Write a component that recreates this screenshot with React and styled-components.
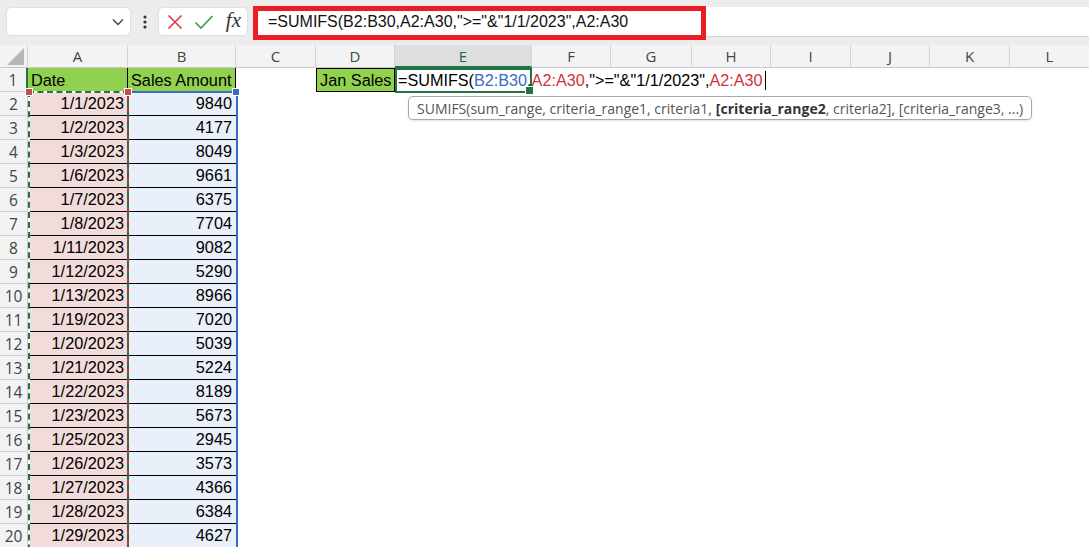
import React from 'react';
import styled, { createGlobalStyle } from 'styled-components';

const COLUMNS = ['A', 'B', 'C', 'D', 'E', 'F', 'G', 'H', 'I', 'J', 'K', 'L'];
// row header width, then A..L
const WIDTHS = [28, 100, 108, 80, 79, 137, 79, 81, 79, 80, 79, 80, 80];

const SALES = [
  ['1/1/2023', 9840],
  ['1/2/2023', 4177],
  ['1/3/2023', 8049],
  ['1/6/2023', 9661],
  ['1/7/2023', 6375],
  ['1/8/2023', 7704],
  ['1/11/2023', 9082],
  ['1/12/2023', 5290],
  ['1/13/2023', 8966],
  ['1/19/2023', 7020],
  ['1/20/2023', 5039],
  ['1/21/2023', 5224],
  ['1/22/2023', 8189],
  ['1/23/2023', 5673],
  ['1/25/2023', 2945],
  ['1/26/2023', 3573],
  ['1/27/2023', 4366],
  ['1/28/2023', 6384],
  ['1/29/2023', 4627],
];

const FORMULA = '=SUMIFS(B2:B30,A2:A30,">="&"1/1/2023",A2:A30';

const GlobalStyle = createGlobalStyle`
  html, body {
    margin: 0;
    padding: 0;
    background: #ffffff;
    overflow: hidden;
  }
  * {
    box-sizing: border-box;
  }
`;

const App = () => (
  <Page>
    <GlobalStyle />
    <TopBar>
      <NameBox>
        <svg width="12" height="8" viewBox="0 0 12 8">
          <path d="M1 1.5 L6 6.5 L11 1.5" fill="none" stroke="#444" strokeWidth="1.4" />
        </svg>
      </NameBox>
      <Dots>
        <svg width="4" height="14" viewBox="0 0 4 14">
          <circle cx="2" cy="2" r="1.6" fill="#333" />
          <circle cx="2" cy="7" r="1.6" fill="#333" />
          <circle cx="2" cy="12" r="1.6" fill="#333" />
        </svg>
      </Dots>
      <FormulaButtons>
        <svg width="16" height="16" viewBox="0 0 16 16">
          <path d="M1.5 1.5 L14.5 14.5 M14.5 1.5 L1.5 14.5" stroke="#e0383e" strokeWidth="1.6" />
        </svg>
        <svg width="20" height="16" viewBox="0 0 20 16">
          <path d="M1.5 8.5 L7 14 L18.5 2" fill="none" stroke="#3aa24a" strokeWidth="1.7" />
        </svg>
        <FxLabel>fx</FxLabel>
      </FormulaButtons>
      <FormulaField>
        <RedMark />
        <FormulaText>{FORMULA}</FormulaText>
      </FormulaField>
    </TopBar>

    <Sheet>
      <Corner>
        <svg width="17" height="17" viewBox="0 0 17 17">
          <path d="M17 0 L17 17 L0 17 Z" fill="#b6b6b6" />
        </svg>
      </Corner>
      {COLUMNS.map((c) => (
        <ColHeader key={c} $active={c === 'E'}>{c}</ColHeader>
      ))}

      <RowHeader $active>1</RowHeader>
      <Cell $fill="green" $border="right">Date</Cell>
      <Cell $fill="green" $border="right">Sales Amount</Cell>
      <Cell />
      <Cell $fill="green" $border="box">Jan Sales</Cell>
      <ActiveCell>
        <EditText>
          =SUMIFS(<Ref $color="#3a6cc4">B2:B30</Ref>,<Ref $color="#d13438">A2:A30</Ref>,"&gt;="&amp;"1/1/2023",<Ref $color="#d13438">A2:A30</Ref>
          <Caret />
        </EditText>
      </ActiveCell>
      {Array.from({ length: 7 }).map((_, i) => <Cell key={i} />)}

      {SALES.map(([date, amount], i) => (
        <React.Fragment key={date}>
          <RowHeader>{i + 2}</RowHeader>
          <Cell $fill="pink" $align="right" $border="bottom">{date}</Cell>
          <Cell $fill="blue" $align="right" $border="bottom">{amount}</Cell>
          {Array.from({ length: 10 }).map((_, j) => <Cell key={j} />)}
        </React.Fragment>
      ))}

      <DateRange />
      <AmountRange />
      <Handle $color="#c0504d" $x={29} />
      <Handle $color="#c0504d" $x={128} />
      <Handle $color="#3a6cc4" $x={236} />

      <Tooltip>
        SUMIFS(sum_range, criteria_range1, criteria1, <b>[criteria_range2</b>, criteria2], [criteria_range3, ...)
      </Tooltip>
    </Sheet>
  </Page>
);

const Page = styled.div`
  width: 1089px;
  height: 547px;
  overflow: hidden;
  display: flex;
  flex-direction: column;
  font-family: "Liberation Sans", Arial, sans-serif;
`;

const TopBar = styled.div`
  height: 45px;
  flex: none;
  display: flex;
  align-items: flex-start;
  padding: 7px 0 0 6px;
  background: #ececec;
`;

const NameBox = styled.div`
  width: 125px;
  height: 29px;
  background: #ffffff;
  border: 1px solid #e0e0e0;
  border-radius: 5px;
  display: flex;
  align-items: center;
  justify-content: flex-end;
  padding-right: 6px;
`;

const Dots = styled.div`
  width: 27px;
  height: 29px;
  display: flex;
  align-items: center;
  justify-content: center;
`;

const FormulaButtons = styled.div`
  width: 90px;
  height: 29px;
  background: #ffffff;
  border: 1px solid #e0e0e0;
  border-radius: 5px;
  display: flex;
  align-items: center;
  justify-content: space-between;
  padding: 0 6px 0 8px;
`;

const FxLabel = styled.span`
  font-family: "Liberation Serif", "Times New Roman", serif;
  font-style: italic;
  font-size: 21px;
  color: #333;
  line-height: 1;
  margin-bottom: 3px;
`;

const FormulaField = styled.div`
  position: relative;
  flex: 1;
  height: 30px;
  margin-left: 5px;
  background: #ffffff;
  border-bottom: 1px solid #d6d6d6;
  display: flex;
  align-items: center;
  padding-left: 15px;
`;

const RedMark = styled.div`
  position: absolute;
  left: 0;
  top: -1px;
  width: 453px;
  height: 34px;
  border: 5px solid #ec1c24;
`;

const FormulaText = styled.span`
  position: relative;
  font-size: 16px;
  color: #111;
  white-space: nowrap;
`;

const Sheet = styled.div`
  position: relative;
  flex: 1;
  display: grid;
  grid-template-columns: ${WIDTHS.map((w) => `${w}px`).join(' ')};
  grid-template-rows: 23px repeat(20, 24px);
  overflow: hidden;
`;

const Corner = styled.div`
  background: #f3f3f3;
  border-right: 1px solid #d4d4d4;
  border-bottom: 1px solid #c8c8c8;
  display: flex;
  align-items: flex-end;
  justify-content: flex-end;
  padding: 0 3px 2px 0;
`;

const ColHeader = styled.div`
  background: ${(p) => (p.$active ? '#dedede' : '#f3f3f3')};
  color: ${(p) => (p.$active ? '#1e6b41' : '#444')};
  border-right: 1px solid #d4d4d4;
  border-bottom: ${(p) => (p.$active ? '2px solid #217346' : '1px solid #c8c8c8')};
  font-family: "Open Sans", "Noto Sans", sans-serif;
  font-size: 15px;
  display: flex;
  align-items: center;
  justify-content: center;
`;

const RowHeader = styled.div`
  background: #f3f3f3;
  color: #444;
  border-bottom: 1px solid #d4d4d4;
  border-right: ${(p) => (p.$active ? '2px solid #217346' : '1px solid #c8c8c8')};
  font-family: "Open Sans", "Noto Sans", sans-serif;
  font-size: 15.5px;
  display: flex;
  align-items: center;
  justify-content: center;
`;

const FILLS = {
  green: '#92d050',
  pink: '#f2dcdb',
  blue: '#eaf0f9',
};

const BORDERS = {
  right: 'border-right: 1px solid #000;',
  bottom: 'border-bottom: 1px solid #000;',
  box: 'border: 1px solid #000;',
};

const Cell = styled.div`
  background: ${(p) => FILLS[p.$fill] || '#ffffff'};
  ${(p) => BORDERS[p.$border] || ''}
  display: flex;
  align-items: center;
  justify-content: ${(p) => (p.$align === 'right' ? 'flex-end' : 'flex-start')};
  padding: 0 4px 0 3px;
  font-size: 16.3px;
  color: #000;
  white-space: nowrap;
  overflow: hidden;
`;

const ActiveCell = styled.div`
  position: relative;
  z-index: 2;
  background: #ffffff;
  border: 2px solid #217346;
  margin-bottom: -1px;
  display: flex;
  align-items: center;
  padding-left: 1px;

  &::after {
    content: '';
    position: absolute;
    right: -4px;
    bottom: -4px;
    width: 7px;
    height: 7px;
    background: #217346;
    border: 1px solid #ffffff;
  }
`;

const EditText = styled.span`
  font-size: 16.2px;
  color: #000;
  white-space: nowrap;
  display: flex;
  align-items: center;
`;

const Ref = styled.span`
  color: ${(p) => p.$color};
`;

const Caret = styled.span`
  display: inline-block;
  width: 1px;
  height: 19px;
  margin-left: 2px;
  background: #000;
`;

const DateRange = styled.div`
  position: absolute;
  left: 28px;
  top: 46px;
  width: 101px;
  height: 520px;
  border: 2px solid;
  border-color: #ffffff #d13438 #ffffff #ffffff;
  pointer-events: none;

  &::after {
    content: '';
    position: absolute;
    inset: -2px;
    border: 2px dashed #217346;
  }
`;

const AmountRange = styled.div`
  position: absolute;
  left: 129px;
  top: 46px;
  width: 109px;
  height: 520px;
  border: 2px solid #3a6cc4;
  border-left: none;
  pointer-events: none;
`;

const Handle = styled.div`
  position: absolute;
  z-index: 3;
  top: 43px;
  left: ${(p) => p.$x - 4}px;
  width: 8px;
  height: 8px;
  background: ${(p) => p.$color};
  border: 1px solid #ffffff;
`;

const Tooltip = styled.div`
  position: absolute;
  z-index: 4;
  left: 408px;
  top: 51px;
  height: 24px;
  display: flex;
  align-items: center;
  padding: 0 8px;
  background: #ffffff;
  border: 1px solid #a9a9a9;
  border-radius: 5px;
  box-shadow: 0 1px 2px rgba(0, 0, 0, 0.12);
  font-family: "Open Sans", "Noto Sans", sans-serif;
  font-size: 14px;
  color: #555;
  white-space: nowrap;

  b {
    color: #333;
    margin-left: 4px;
  }
`;

export default App;
